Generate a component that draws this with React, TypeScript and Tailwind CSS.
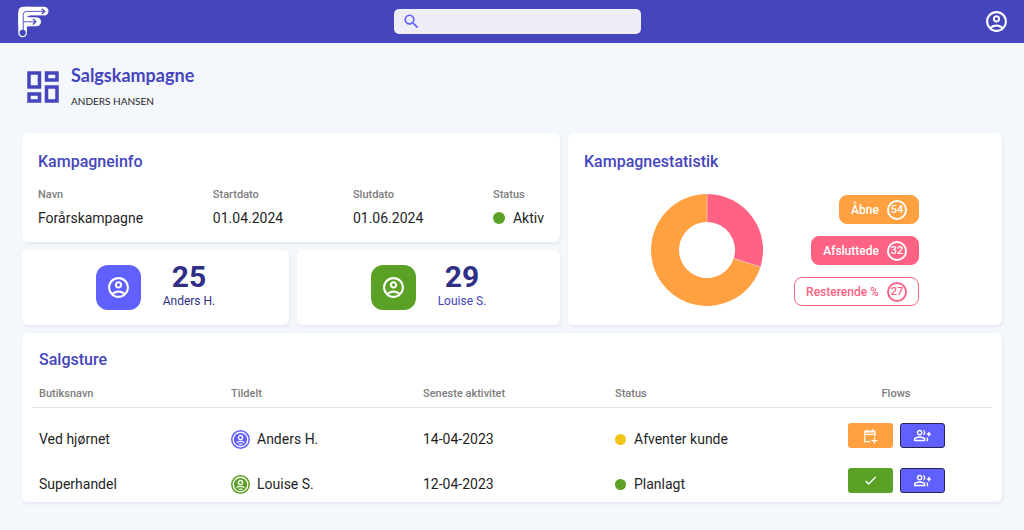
import type { ReactNode } from 'react';
import {
  MdCheck,
  MdOutlineAccountCircle,
  MdOutlineDashboard,
  MdOutlineGroupAdd,
  MdSearch,
} from 'react-icons/md';

const INFO = [
  { label: 'Navn', value: 'Forårskampagne' },
  { label: 'Startdato', value: '01.04.2024' },
  { label: 'Slutdato', value: '01.06.2024' },
  { label: 'Status', value: 'Aktiv', dot: 'bg-[#5aa126]' },
];

const STATS = [
  { label: 'Åbne', value: 54, style: 'bg-[#ffa041] border-[#ffa041] text-white' },
  { label: 'Afsluttede', value: 32, style: 'bg-[#ff6384] border-[#ff6384] text-white' },
  { label: 'Resterende %', value: 27, style: 'bg-white border-[#ff6384] text-[#ff6384]' },
];

const COLUMNS = ['Butiksnavn', 'Tildelt', 'Seneste aktivitet', 'Status'];

const TRIPS = [
  {
    shop: 'Ved hjørnet',
    person: 'Anders H.',
    personColor: 'text-[#6060ff]',
    date: '14-04-2023',
    status: 'Afventer kunde',
    dot: 'bg-[#f2c516]',
    planned: false,
  },
  {
    shop: 'Superhandel',
    person: 'Louise S.',
    personColor: 'text-[#5aa126]',
    date: '12-04-2023',
    status: 'Planlagt',
    dot: 'bg-[#5aa126]',
    planned: true,
  },
];

function Logo() {
  return (
    <svg width="32" height="32" viewBox="0 0 32 32" fill="none" aria-hidden="true">
      <path
        d="M4.600 27V8.500Q4.600 5.100 8 5.100H26.200"
        stroke="#fff"
        strokeWidth="8.600"
        strokeLinecap="round"
        strokeLinejoin="round"
      />
      <path d="M.3 27V6Q.3.800 6 .8H12V20.300H.3Z" fill="#fff" />
      <path d="M8 15.800H18.500" stroke="#fff" strokeWidth="9" strokeLinecap="round" />
      <path d="M9.500 10.400H27" stroke="#4545bd" strokeWidth="1.300" />
      <path d="M5.200 24V8.500Q5.200 5.400 8.500 5.400H26.500M5.200 15.800H17.500" stroke="#4545bd" strokeWidth="0.900" />
      <path d="M23.700 2.700L26.700 5.400L23.700 8.100M14.900 13.100L17.900 15.800L14.900 18.500" stroke="#4545bd" strokeWidth="1.300" />
      <circle cx="4.700" cy="26.800" r="3.100" fill="#4545bd" />
    </svg>
  );
}

function CalendarPlus() {
  return (
    <svg width="16" height="16" viewBox="0 0 24 24" fill="none" stroke="currentColor" strokeWidth="1.800" aria-hidden="true">
      <path d="M12 20.500H4V5h15.500v8M4 9.500h15.500M7.500 2v4M16 2v4M18.500 14.500v9M14 19h9" />
      <path d="M4 5.500h15.500" strokeWidth="2.600" />
    </svg>
  );
}

function PersonBadge({ className }: { className: string }) {
  return (
    <svg width="19" height="19" viewBox="0 0 19 19" fill="none" className={className} aria-hidden="true">
      <circle cx="9.500" cy="9.500" r="8.700" stroke="currentColor" strokeWidth="1.500" />
      <circle cx="9.500" cy="9.500" r="6.600" fill="currentColor" />
      <circle cx="9.500" cy="7.600" r="2.100" stroke="#fff" strokeWidth="1.300" />
      <path d="M5.500 12.600Q9.500 10.200 13.500 12.600" stroke="#fff" strokeWidth="1.100" />
      <path d="M6.800 14Q9.500 12.900 12.200 14Q9.500 15.700 6.800 14Z" fill="#fff" />
    </svg>
  );
}

function Card({ title, className = '', children }: { title?: string; className?: string; children: ReactNode }) {
  return (
    <section className={`rounded-md bg-white shadow-[1px_2px_3px_#e6e8f6] ${className}`}>
      {title && <h2 className="text-base leading-6 font-medium text-[#4545bd]">{title}</h2>}
      {children}
    </section>
  );
}

function PersonCard({ name, count, tile, nameColor }: { name: string; count: number; tile: string; nameColor: string }) {
  return (
    <Card className="flex h-[75px] items-center justify-center gap-[22px]">
      <div className={`grid size-[45px] place-items-center rounded-xl text-white ${tile}`}>
        <MdOutlineAccountCircle size={25} />
      </div>
      <div className="pb-1.5 text-center">
        <p className="text-3xl leading-8 font-bold text-[#2f2f85]">{count}</p>
        <p className={`text-xs ${nameColor}`}>{name}</p>
      </div>
    </Card>
  );
}

function Donut() {
  return (
    <svg width="112" height="112" viewBox="0 0 112 112" role="img" aria-label="Kampagnestatistik">
      <path d="M56 0A56 56 0 1 0 109.400 73L82.700 64.500A28 28 0 1 1 56 28Z" fill="#ffa041" />
      <path d="M56 0A56 56 0 0 1 109.400 73L82.700 64.500A28 28 0 0 0 56 28Z" fill="#ff6384" />
      <path d="M56 0V28M109.400 73L82.700 64.500" stroke="#ffc9b8" strokeWidth="0.800" />
    </svg>
  );
}

export default function App() {
  return (
    <div className="min-h-screen bg-[#f4f7fb] font-['Roboto',sans-serif] text-[#1f1f1f]">
      <header className="flex h-[43px] items-center justify-between bg-[#4545bd] pr-[15px] pl-[18px]">
        <a href="#" aria-label="Forside">
          <Logo />
        </a>
        <label className="flex h-[25px] w-[247px] items-center gap-1 rounded-[5px] bg-[#efedf5] px-2 text-[#6060ff]">
          <MdSearch size={19} />
          <input type="search" aria-label="Søg" className="min-w-0 flex-1 bg-transparent text-xs text-[#1f1f1f] outline-none" />
        </label>
        <button type="button" aria-label="Konto" className="text-white">
          <MdOutlineAccountCircle size={25} />
        </button>
      </header>

      <main className="px-[22px] pb-7">
        <div className="flex h-[90px] items-center gap-[7px] pb-0.5">
          <MdOutlineDashboard size={42} className="text-[#4545bd]" />
          <div className="font-['Lato',sans-serif]">
            <h1 className="text-lg leading-7 font-bold text-[#4545bd]">Salgskampagne</h1>
            <p className="text-[10px] leading-6">ANDERS HANSEN</p>
          </div>
        </div>

        <div className="grid grid-cols-[538fr_434fr] gap-2">
          <div className="grid gap-2">
            <Card title="Kampagneinfo" className="px-4 pt-[17px] pb-3">
              <dl className="mt-[13px] flex justify-between">
                {INFO.map((item) => (
                  <div key={item.label}>
                    <dt className="text-[11px] leading-4 font-medium text-[#7d7d7d]">{item.label}</dt>
                    <dd className="mt-[3px] flex items-center gap-2 text-sm leading-6">
                      {item.dot && <span className={`size-3 rounded-full ${item.dot}`} />}
                      {item.value}
                    </dd>
                  </div>
                ))}
              </dl>
            </Card>
            <div className="grid grid-cols-[267fr_263fr] gap-2">
              <PersonCard name="Anders H." count={25} tile="bg-[#6060ff]" nameColor="text-[#2f2f85]" />
              <PersonCard name="Louise S." count={29} tile="bg-[#5aa126]" nameColor="text-[#4545bd]" />
            </div>
          </div>

          <Card title="Kampagnestatistik" className="px-4 pt-[17px]">
            <div className="mt-5 flex items-end justify-center gap-[31px]">
              <Donut />
              <ul className="flex flex-col items-end gap-3">
                {STATS.map((s) => (
                  <li
                    key={s.label}
                    className={`flex h-[29px] items-center gap-2 rounded-lg border px-[11px] text-xs font-medium ${s.style}`}
                  >
                    {s.label}
                    <span className="grid size-5 place-items-center rounded-full border-2 border-current text-[11px] leading-none">
                      {s.value}
                    </span>
                  </li>
                ))}
              </ul>
            </div>
          </Card>
        </div>

        <Card className="mt-2 px-[10px] pt-[15px] pb-1">
          <h2 className="px-[7px] text-base leading-6 font-medium text-[#4545bd]">Salgsture</h2>
          <table className="mt-[14px] w-full table-fixed text-left">
            <thead>
              <tr className="border-b border-[#e4e4e4] text-[11px] leading-4 text-[#7d7d7d]">
                {COLUMNS.map((c) => (
                  <th key={c} className="px-[7px] pb-[5px] font-medium">
                    {c}
                  </th>
                ))}
                <th className="pb-[5px] text-center font-medium">Flows</th>
              </tr>
            </thead>
            <tbody className="align-top text-sm leading-[26px]">
              {TRIPS.map((trip) => (
                <tr key={trip.shop}>
                  <td className="px-[7px] pt-[18px] pb-px leading-[26px]">{trip.shop}</td>
                  <td className="px-[7px] pt-[18px] pb-px">
                    <div className="flex items-center gap-[7px]">
                      <PersonBadge className={trip.personColor} />
                      {trip.person}
                    </div>
                  </td>
                  <td className="px-[7px] pt-[18px] pb-px">{trip.date}</td>
                  <td className="px-[7px] pt-[18px] pb-px">
                    <div className="flex items-center gap-2">
                      <span className={`size-[11px] rounded-full ${trip.dot}`} />
                      {trip.status}
                    </div>
                  </td>
                  <td className="pt-[15px]">
                    <div className="flex justify-center gap-[7px] text-white">
                      {trip.planned ? (
                        <button type="button" aria-label="Planlagt" className="grid h-[25px] w-[45px] place-items-center rounded-[3px] bg-[#5aa126]">
                          <MdCheck size={15} />
                        </button>
                      ) : (
                        <button type="button" aria-label="Planlæg" className="grid h-[25px] w-[45px] place-items-center rounded-[3px] bg-[#ffa041]">
                          <CalendarPlus />
                        </button>
                      )}
                      <button
                        type="button"
                        aria-label="Tildel"
                        className="grid h-[25px] w-[45px] place-items-center rounded-[3px] border border-[#25255c] bg-[#6060ff]"
                      >
                        <MdOutlineGroupAdd size={17} />
                      </button>
                    </div>
                  </td>
                </tr>
              ))}
            </tbody>
          </table>
        </Card>
      </main>
    </div>
  );
}
